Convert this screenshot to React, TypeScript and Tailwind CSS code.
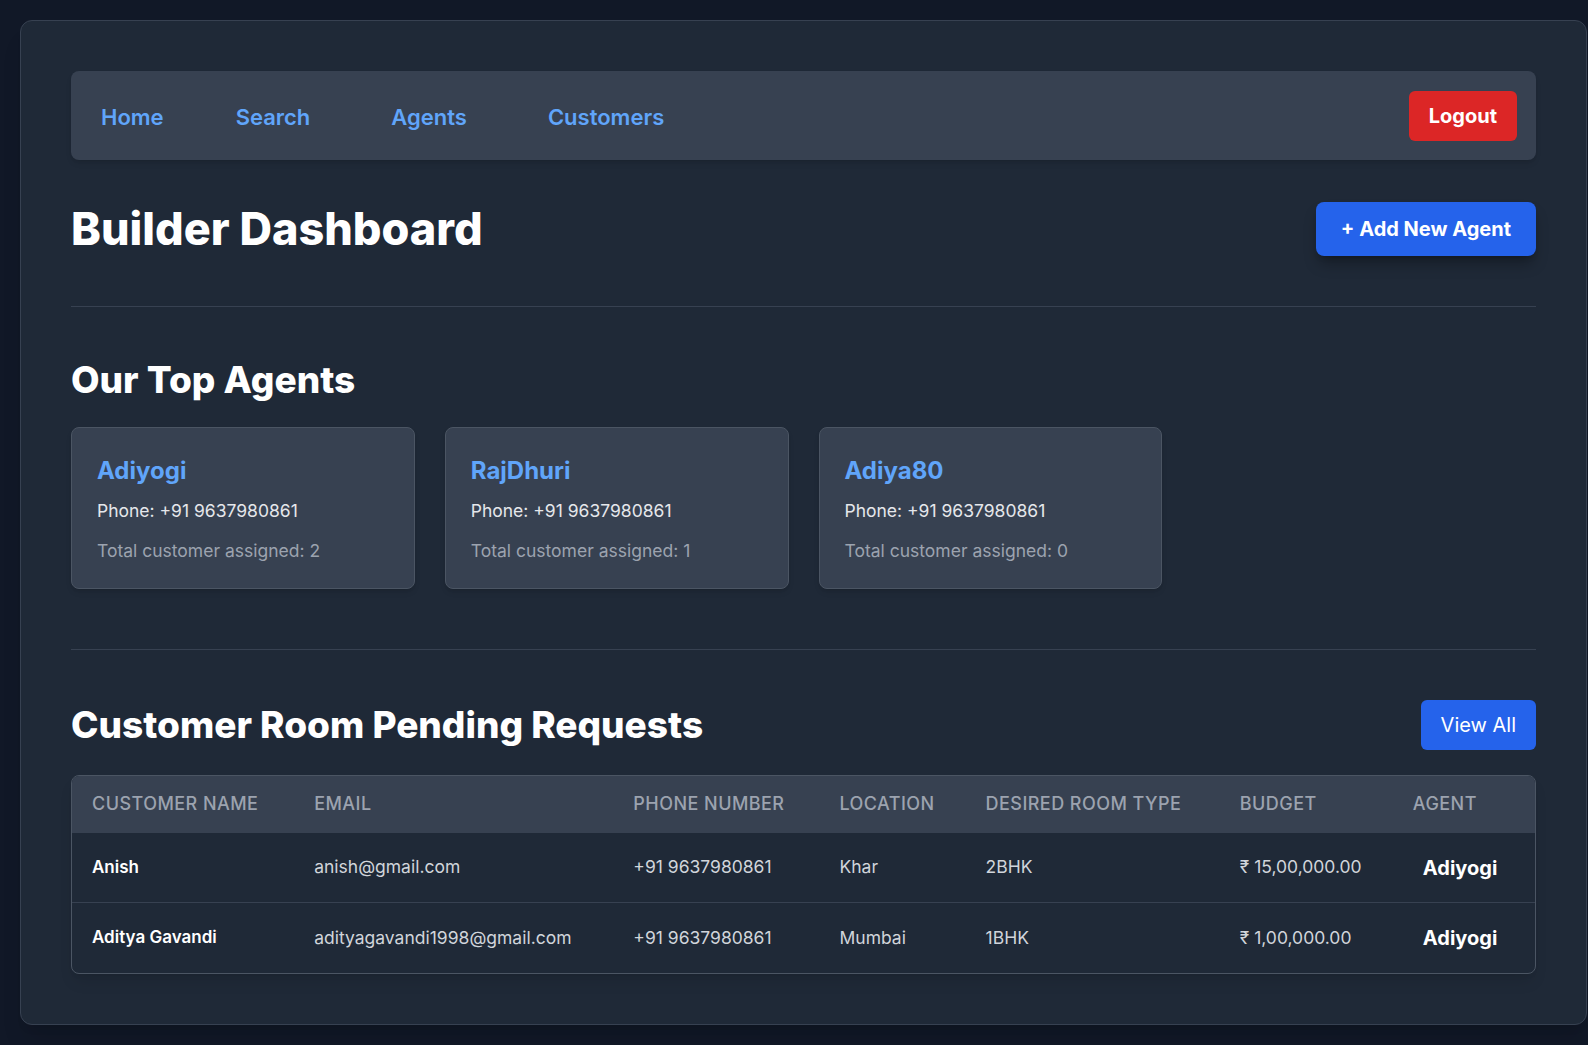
import React from 'react';

const navLinks = [
  { label: 'Home', cls: 'mr-[72px]' },
  { label: 'Search', cls: 'mr-[81px]' },
  { label: 'Agents', cls: 'mr-[81px]' },
  { label: 'Customers', cls: '' },
];

const agents = [
  { name: 'Adiyogi', phone: '+91 9637980861', total: 2 },
  { name: 'RajDhuri', phone: '+91 9637980861', total: 1 },
  { name: 'Adiya80', phone: '+91 9637980861', total: 0 },
];

const requests = [
  {
    name: 'Anish',
    email: 'anish@gmail.com',
    phone: '+91 9637980861',
    location: 'Khar',
    room: '2BHK',
    budget: '₹ 15,00,000.00',
    agent: 'Adiyogi',
  },
  {
    name: 'Aditya Gavandi',
    email: 'adityagavandi1998@gmail.com',
    phone: '+91 9637980861',
    location: 'Mumbai',
    room: '1BHK',
    budget: '₹ 1,00,000.00',
    agent: 'Adiyogi',
  },
];

const headers = ['Customer Name', 'Email', 'Phone Number', 'Location', 'Desired Room Type', 'Budget', 'Agent'];

const App = () => {
  return (
    <div className="min-h-screen bg-[#111827] pt-5 pl-5 pb-5 font-['Inter',sans-serif]">
      <div className="w-[1567px] bg-[#1f2937] border border-[#374151] rounded-xl shadow-xl p-[50px]">
        {/* Navbar */}
        <nav className="h-[89px] bg-[#374151] rounded-lg shadow-md flex items-center justify-between pl-[30px] pr-[19px]">
          <div className="flex items-center pt-1">
            {navLinks.map((link) => (
              <a key={link.label} href="#" className={`text-[22px] font-semibold text-[#60a5fa] ${link.cls}`}>
                {link.label}
              </a>
            ))}
          </div>
          <button className="bg-[#dc2626] text-white text-xl font-bold leading-7 px-5 py-[11px] rounded-md">
            Logout
          </button>
        </nav>

        {/* Header */}
        <div className="mt-[42px] h-[54px] flex items-center justify-between">
          <h1 className="text-[45px] leading-[52px] font-extrabold text-white">Builder Dashboard</h1>
          <button className="bg-[#2563eb] text-white text-xl font-bold leading-7 px-[25px] py-[13px] rounded-lg shadow-lg shadow-black/30">
            + Add New Agent
          </button>
        </div>

        <hr className="mt-[50px] border-t border-[#374151]" />

        {/* Top agents */}
        <h2 className="mt-[53px] text-[37px] leading-10 font-extrabold text-white">Our Top Agents</h2>
        <div className="mt-[27px] grid grid-cols-4 gap-[30px]">
          {agents.map((agent) => (
            <div
              key={agent.name}
              className="bg-[#374151] border border-[#4b5563] rounded-lg shadow-md pl-[25px] pr-6 pt-[27px] pb-[23px]"
            >
              <h3 className="text-2xl leading-8 font-bold text-[#60a5fa] mb-[10px]">{agent.name}</h3>
              <p className="text-[17.5px] leading-7 text-[#e5e7eb] mb-3">Phone: {agent.phone}</p>
              <p className="text-[17.5px] leading-7 text-[#9ca3af]">Total customer assigned: {agent.total}</p>
            </div>
          ))}
        </div>

        <hr className="mt-[60px] border-t border-[#374151]" />

        {/* Pending requests */}
        <div className="mt-[50px] h-[50px] flex items-center justify-between">
          <h2 className="text-[37px] leading-10 font-extrabold text-white">Customer Room Pending Requests</h2>
          <button className="bg-[#2563eb] text-white text-xl leading-7 px-5 py-[11px] rounded-md">View All</button>
        </div>

        <div className="mt-[25px] border border-[#4b5563] rounded-lg overflow-hidden shadow-lg">
          <table className="w-full table-fixed border-collapse">
            <colgroup>
              <col className="w-[222px]" />
              <col className="w-[319px]" />
              <col className="w-[206px]" />
              <col className="w-[146px]" />
              <col className="w-[254px]" />
              <col className="w-[173px]" />
              <col className="w-[142px]" />
            </colgroup>
            <thead className="bg-[#374151]">
              <tr>
                {headers.map((h) => (
                  <th
                    key={h}
                    className="px-5 py-[14px] text-left text-lg leading-7 font-medium uppercase tracking-wide text-[#9ca3af]"
                  >
                    {h}
                  </th>
                ))}
              </tr>
            </thead>
            <tbody>
              {requests.map((r) => (
                <tr key={r.email} className="border-t border-[#374151] h-[70px]">
                  <td className="px-5 text-[17px] font-semibold text-white">{r.name}</td>
                  <td className="px-5 text-[17.5px] text-[#d1d5db]">{r.email}</td>
                  <td className="px-5 text-[17.5px] text-[#d1d5db]">{r.phone}</td>
                  <td className="px-5 text-[17.5px] text-[#d1d5db]">{r.location}</td>
                  <td className="px-5 text-[17.5px] text-[#d1d5db]">{r.room}</td>
                  <td className="px-5 text-[17.5px] text-[#d1d5db]">{r.budget}</td>
                  <td className="pl-[30px] pr-2 text-xl font-bold text-white">{r.agent}</td>
                </tr>
              ))}
            </tbody>
          </table>
        </div>
      </div>
    </div>
  );
};

export default App;
